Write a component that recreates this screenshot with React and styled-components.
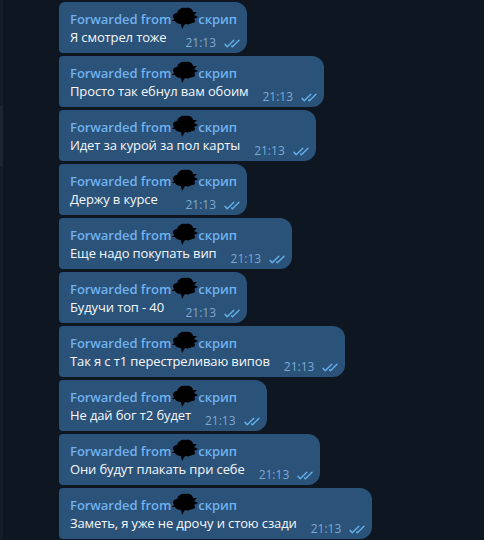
import React from "react";
import styled, { createGlobalStyle } from "styled-components";

const Global = createGlobalStyle`
  html, body { margin: 0; padding: 0; background: #0e1621; }
  body { font-family: "Open Sans", "Noto Sans", sans-serif; }
`;

const Page = styled.div`
  display: flex;
  width: 484px;
  height: 540px;
  overflow: hidden;
  background: #0e1621;
`;

const Rail = styled.div`
  width: 3px;
  flex: none;
  background: #141d27;
  padding-top: 106px;
  box-sizing: border-box;
`;

const Thumb = styled.div`
  height: 60px;
  background: #1c2733;
`;

const Feed = styled.div`
  flex: 1;
  display: flex;
  flex-direction: column;
  align-items: flex-start;
  gap: 3px;
  padding: 2px 0 0 56px;
`;

const Bubble = styled.div`
  display: inline-flex;
  flex-direction: column;
  background: #2b5278;
  border-radius: ${(p) => (p.$first ? "6px" : "4px")} 12px 12px 4px;
  padding: 8px 6px 7px 11px;
  box-sizing: border-box;
`;

const Name = styled.div`
  font-size: 13px;
  font-weight: 600;
  line-height: 18px;
  color: #71b1ee;
  white-space: nowrap;
  padding-right: 4px;
  display: flex;
  align-items: center;
  letter-spacing: -0.05px;
`;

const Blob = styled.svg`
  width: 28px;
  height: 26px;
  margin: -5px -1px -3px 0;
  flex: none;
`;

const Body = styled.div`
  display: flex;
  align-items: flex-end;
`;

const Text = styled.span`
  flex: 1;
  font-size: 13px;
  line-height: 18px;
  color: #f5f7fa;
  white-space: nowrap;
  letter-spacing: -0.12px;
`;

const Meta = styled.span`
  display: inline-flex;
  align-items: center;
  gap: 8px;
  margin-left: 14px;
  margin-bottom: -4px;
  font-size: 12px;
  line-height: 14px;
  color: #7da8d3;
  white-space: nowrap;
`;

const Checks = styled.svg`
  width: 17px;
  height: 9px;
  flex: none;
`;

const messages = [
  "Я смотрел тоже",
  "Просто так ебнул вам обоим",
  "Идет за курой за пол карты",
  "Держу в курсе",
  "Еще надо покупать вип",
  "Будучи топ - 40",
  "Так я с т1 перестреливаю випов",
  "Не дай бог т2 будет",
  "Они будут плакать при себе",
  "Заметь, я уже не дрочу и стою сзади",
];

function Redaction() {
  return (
    <Blob viewBox="0 0 28 26">
      <path
        d="M2 12 C2 9 4 8 6 8 C7 4 11 2 15 3 C19 2 22 5 22 7 L26 7 L23 10 L27 12 L23 14 C25 16 24 18 21 18 C19 19 17 20 14 19 L11 24 L10 19 C7 19 5 18 4 16 L1 16 L3 14 Z"
        fill="#000"
      />
    </Blob>
  );
}

function DoubleCheck() {
  return (
    <Checks viewBox="0 0 17 9">
      <path
        d="M1 5.2 L3.2 7.8 L9.8 1.2 M7.6 7 L8.4 7.8 L15 1.2"
        fill="none"
        stroke="#64b2ec"
        strokeWidth="1.4"
        strokeLinecap="round"
        strokeLinejoin="round"
      />
    </Checks>
  );
}

export default function App() {
  return (
    <Page>
      <Global />
      <Rail>
        <Thumb />
      </Rail>
      <Feed>
        {messages.map((m, i) => (
          <Bubble key={i} $first={i === 0}>
            <Name>
              Forwarded from
              <Redaction />
              скрип
            </Name>
            <Body>
              <Text>{m}</Text>
              <Meta>
                21:13
                <DoubleCheck />
              </Meta>
            </Body>
          </Bubble>
        ))}
      </Feed>
    </Page>
  );
}
